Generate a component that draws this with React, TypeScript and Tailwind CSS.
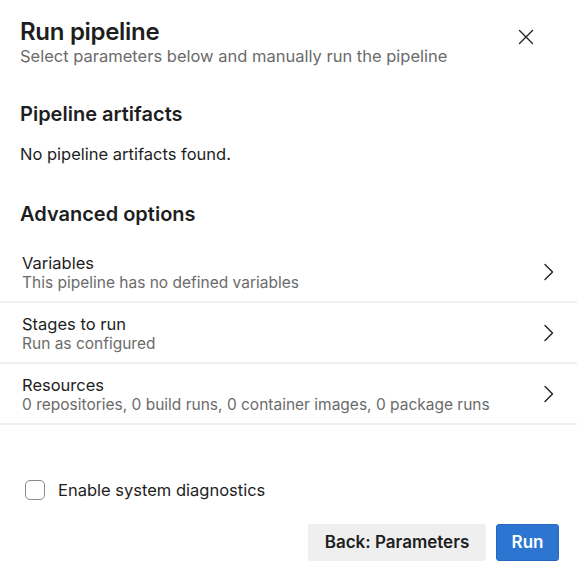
import React from "react";

const rows = [
  { title: "Variables", sub: "This pipeline has no defined variables" },
  { title: "Stages to run", sub: "Run as configured" },
  { title: "Resources", sub: "0 repositories, 0 build runs, 0 container images, 0 package runs" },
];

function Chevron() {
  return (
    <svg width="12" height="18" viewBox="0 0 12 18" fill="none">
      <path d="M2 1.5 L9.5 9 L2 16.5" stroke="#1f1f1f" strokeWidth="1.4" strokeLinecap="round" strokeLinejoin="round" />
    </svg>
  );
}

function CloseIcon() {
  return (
    <svg width="16" height="16" viewBox="0 0 16 16" fill="none">
      <path d="M1.5 1.5 L14.5 14.5 M14.5 1.5 L1.5 14.5" stroke="#1f1f1f" strokeWidth="1.3" strokeLinecap="round" />
    </svg>
  );
}

export default function App() {
  return (
    <div
      className="w-[577px] h-[577px] bg-white text-[#1e1e1e] flex flex-col overflow-hidden"
      style={{ fontFamily: "Inter, 'Noto Sans', sans-serif" }}
    >
      <div className="flex justify-between pl-5 pr-[43px] pt-[17px]">
        <div className="flex flex-col">
          <h1 className="text-[24px] font-semibold leading-[30px] tracking-[-0.3px]">Run pipeline</h1>
          <p className="text-[16.5px] leading-[18px] text-[#6b6b6b]">
            Select parameters below and manually run the pipeline
          </p>
        </div>
        <button className="mt-[12px] h-[16px]">
          <CloseIcon />
        </button>
      </div>

      <h2 className="mt-[37px] pl-5 text-[20px] font-semibold leading-[24px]">Pipeline artifacts</h2>
      <p className="mt-[18px] pl-5 text-[16.5px] leading-[20px]">No pipeline artifacts found.</p>

      <h2 className="mt-[38px] pl-5 text-[20px] font-semibold leading-[24px]">Advanced options</h2>

      <div className="mt-[16px] flex flex-col">
        {rows.map((r) => (
          <div
            key={r.title}
            className="flex items-center justify-between h-[61px] pl-[22px] pr-[22px] border-b-2 border-[#efefef]"
          >
            <div className="flex flex-col pt-[3px]">
              <span className="text-[16.5px] leading-[19px]">{r.title}</span>
              <span className="text-[15.5px] leading-[19px] text-[#6b6b6b]">{r.sub}</span>
            </div>
            <Chevron />
          </div>
        ))}
      </div>

      <label className="mt-[55px] ml-[25px] flex items-center gap-[13px]">
        <span className="w-[20px] h-[20px] rounded-[5px] border border-[#8a8a8a] bg-white" />
        <span className="text-[16.5px] leading-[20px]">Enable system diagnostics</span>
      </label>

      <div className="mt-[24px] flex justify-end gap-[10px] pr-[18px]">
        <button className="h-[37px] w-[178px] rounded-[3px] bg-[#efefef] text-[17px] font-semibold">
          Back: Parameters
        </button>
        <button className="h-[37px] w-[63px] rounded-[3px] bg-[#2c76d2] border border-[#2468bf] text-white text-[17px] font-semibold">
          Run
        </button>
      </div>
    </div>
  );
}
